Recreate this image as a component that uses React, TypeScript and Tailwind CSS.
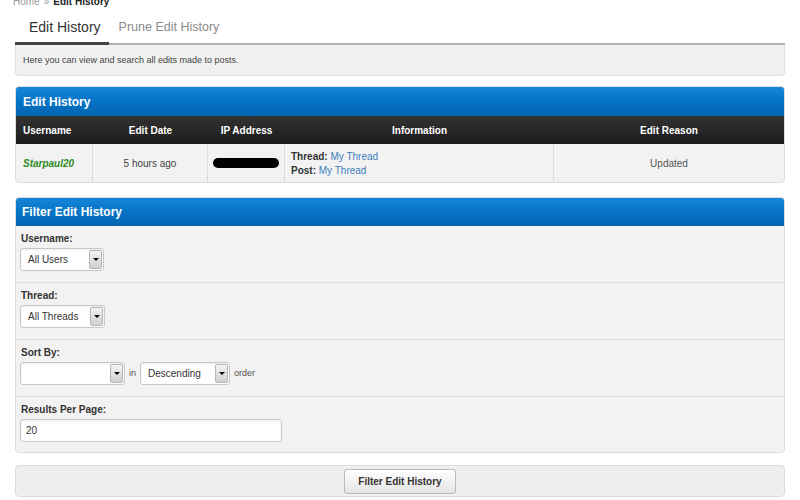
import React from "react";

function SelectBox({ label, width }: { label: string; width: string }) {
  return (
    <div className={`flex h-[23px] items-stretch rounded-[3px] border border-[#c8c8c8] bg-white shadow-[inset_0_1px_2px_rgba(0,0,0,0.08)] ${width}`}>
      <span className="flex flex-1 items-center pl-[7px] text-[10px] text-[#333]">{label}</span>
      <span className="m-[1px] flex w-[13px] items-center justify-center rounded-[2px] border border-[#b5b5b5] bg-gradient-to-b from-[#f4f4f4] to-[#cfcfcf]">
        <span className="h-0 w-0 border-x-[3px] border-t-[3px] border-x-transparent border-t-black" />
      </span>
    </div>
  );
}

function FilterRow({ label, children, last }: { label: string; children: React.ReactNode; last?: boolean }) {
  return (
    <div className={`px-[4px] pt-[7px] ${last ? "pb-[10px]" : "pb-[11px] border-b border-[#dcdcdc]"}`}>
      <div className="mb-[3px] pl-[1px] text-[10px] font-bold leading-[12px] text-[#333]">{label}</div>
      {children}
    </div>
  );
}

export default function App() {
  const headCell = "flex items-center text-[10px] font-bold text-white";
  return (
    <div className="h-[500px] w-[800px] overflow-hidden bg-white px-[15px] text-[#333]" style={{ fontFamily: '"Liberation Sans", Arial, sans-serif' }}>
      {/* breadcrumb, top clipped like the capture */}
      <div className="-mt-[6px] flex h-[14px] items-center gap-[4px] text-[10px]">
        <span className="-ml-[2px] text-[#999]">Home</span>
        <span className="text-[#999]">»</span>
        <span className="font-bold text-[#222]">Edit History</span>
      </div>

      {/* tabs */}
      <div className="mt-[9px] flex items-end border-b-[2px] border-[#b0b0b0]">
        <div className="-mb-[2px] border-b-[3px] border-[#444] pl-[14px] pr-[8px] pb-[4px] text-[14px] text-[#333]">Edit History</div>
        <div className="pl-[10px] pb-[6px] text-[12.5px] text-[#8a8a8a]">Prune Edit History</div>
      </div>
      <div className="rounded-b-[4px] border border-t-0 border-[#e0e0e0] bg-[#f1f1f1] px-[7px] py-[9px] text-[9px] leading-[12px] text-[#444]">
        Here you can view and search all edits made to posts.
      </div>

      {/* Edit History table */}
      <div className="mt-[10px] overflow-hidden rounded-[4px] border border-[#dcdcdc] bg-[#f2f2f2]">
        <div className="flex h-[29px] items-center bg-gradient-to-b from-[#1686d8] via-[#0574c6] to-[#0464b0] px-[7px] text-[12px] font-bold text-white">
          Edit History
        </div>
        <div className="grid h-[28px] grid-cols-[77px_115px_77px_269px_1fr] bg-gradient-to-b from-[#333] to-[#1c1c1c]">
          <div className={`${headCell} pl-[7px]`}>Username</div>
          <div className={`${headCell} justify-center`}>Edit Date</div>
          <div className={`${headCell} justify-center`}>IP Address</div>
          <div className={`${headCell} justify-center`}>Information</div>
          <div className={`${headCell} justify-center`}>Edit Reason</div>
        </div>
        <div className="grid h-[38px] grid-cols-[77px_115px_77px_269px_1fr] text-[10px]">
          <div className="flex items-center border-r border-[#dcdcdc] pl-[7px] font-bold italic text-[#2e8b1e]">Starpaul20</div>
          <div className="flex items-center justify-center border-r border-[#dcdcdc] text-[#444]">5 hours ago</div>
          <div className="flex items-center justify-center border-r border-[#dcdcdc]">
            <span className="h-[10px] w-[66px] rounded-full bg-black" />
          </div>
          <div className="flex flex-col justify-center gap-[1px] border-r border-[#dcdcdc] pl-[6px] leading-[13px]">
            <div><span className="font-bold text-[#333]">Thread:</span> <span className="text-[#3a7fc0]">My Thread</span></div>
            <div><span className="font-bold text-[#333]">Post:</span> <span className="text-[#3a7fc0]">My Thread</span></div>
          </div>
          <div className="flex items-center justify-center text-[#555]">Updated</div>
        </div>
      </div>

      {/* Filter panel */}
      <div className="mt-[14px] overflow-hidden rounded-[4px] border border-[#dcdcdc] bg-[#f2f2f2]">
        <div className="flex h-[28px] items-center bg-gradient-to-b from-[#1686d8] via-[#0574c6] to-[#0464b0] px-[6px] text-[12px] font-bold text-white">
          Filter Edit History
        </div>
        <FilterRow label="Username:">
          <SelectBox label="All Users" width="w-[84px]" />
        </FilterRow>
        <FilterRow label="Thread:">
          <SelectBox label="All Threads" width="w-[85px]" />
        </FilterRow>
        <FilterRow label="Sort By:">
          <div className="flex items-center gap-[4px] text-[9px] text-[#555]">
            <SelectBox label="" width="w-[105px]" />
            <span>in</span>
            <SelectBox label="Descending" width="w-[90px]" />
            <span>order</span>
          </div>
        </FilterRow>
        <FilterRow label="Results Per Page:" last>
          <div className="flex h-[23px] w-[262px] items-center rounded-[3px] border border-[#c8c8c8] bg-white pl-[5px] text-[10px] text-[#333] shadow-[inset_0_1px_2px_rgba(0,0,0,0.08)]">
            20
          </div>
        </FilterRow>
      </div>

      {/* Button bar */}
      <div className="mt-[12px] flex h-[32px] items-center justify-center rounded-[4px] border border-[#dcdcdc] bg-[#efefef]">
        <button className="h-[25px] w-[112px] rounded-[3px] border border-[#b8b8b8] bg-gradient-to-b from-white to-[#e4e4e4] text-[10px] font-bold text-[#333]">
          Filter Edit History
        </button>
      </div>
    </div>
  );
}
